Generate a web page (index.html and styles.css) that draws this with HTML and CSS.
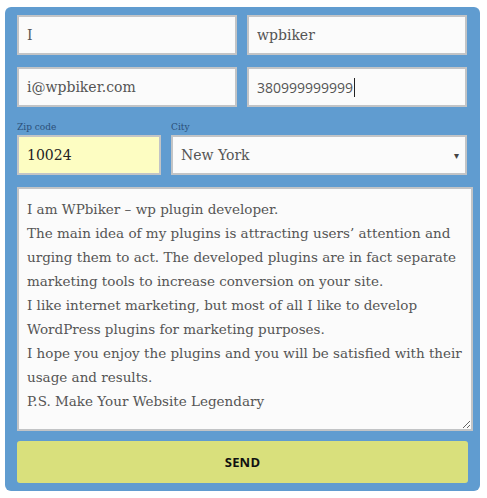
FILE: index.html
```html
<!DOCTYPE html>
<html>
<head>
<meta charset="utf-8">
<link rel="stylesheet" href="styles.css">
</head>
<body>
<form class="panel">
  <div class="row">
    <input class="field" type="text" value="I">
    <input class="field" type="text" value="wpbiker">
  </div>
  <div class="row">
    <input class="field" type="text" value="i@wpbiker.com">
    <div class="field phone">380999999999<span class="caret"></span></div>
  </div>
  <div class="row labeled">
    <div class="col zip-col">
      <label class="lbl">Zip code</label>
      <input class="field zip" type="text" value="10024">
    </div>
    <div class="col city-col">
      <label class="lbl">City</label>
      <div class="field select">New York<span class="arrow">▾</span></div>
    </div>
  </div>
  <textarea class="message">I am WPbiker – wp plugin developer.
The main idea of my plugins is attracting users’ attention and
urging them to act. The developed plugins are in fact separate
marketing tools to increase conversion on your site.
I like internet marketing, but most of all I like to develop
WordPress plugins for marketing purposes.
I hope you enjoy the plugins and you will be satisfied with their
usage and results.
P.S. Make Your Website Legendary</textarea>
  <button class="send" type="button">SEND</button>
</form>
</body>
</html>
```
FILE: styles.css
```css
* { box-sizing: border-box; }
html, body { margin: 0; padding: 0; background: #ffffff; }
body { padding: 7px 0 0 5px; }

.panel {
  width: 475px;
  height: 484px;
  background: #609cd0;
  border-radius: 6px;
  padding: 8px 13px 8px 12px;
  display: flex;
  flex-direction: column;
  margin: 0;
}

.row {
  display: flex;
  gap: 10px;
  margin-bottom: 12px;
}

.field {
  width: 220px;
  height: 40px;
  border: 2px solid #c2c4c6;
  background: #fbfbfb;
  padding: 0 8px;
  font-family: "DejaVu Serif", serif;
  font-size: 14px;
  color: #555555;
  outline: none;
  margin: 0;
  display: flex;
  align-items: center;
}

.phone {
  font-family: "Open Sans", "Noto Sans", sans-serif;
  font-size: 14px;
  color: #555555;
}
.caret {
  display: inline-block;
  width: 1px;
  height: 19px;
  background: #222;
  margin-left: 1px;
}

.labeled { margin-bottom: 12px; }
.col { display: flex; flex-direction: column; }
.zip-col { width: 144px; }
.city-col { width: 296px; }
.lbl {
  font-family: "DejaVu Serif", serif;
  font-size: 9px;
  line-height: 12px;
  color: #2b4f78;
  height: 16px;
  padding-top: 2px;
}
.zip { width: 144px; background: #fdfdc2; color: #222222; }
.select { width: 296px; justify-content: space-between; padding-right: 6px; }
.arrow { font-size: 10px; color: #444; font-family: "DejaVu Sans", sans-serif; }

.message {
  width: 456px;
  height: 244px;
  border: 2px solid #c2c4c6;
  background: #fbfbfb;
  padding: 8px 8px;
  font-family: "DejaVu Serif", serif;
  font-size: 13.5px;
  line-height: 24px;
  color: #555555;
  white-space: pre;
  overflow: hidden;
  resize: vertical;
  margin: 0 0 10px 0;
  outline: none;
}

.send {
  width: 451px;
  height: 42px;
  border: none;
  border-radius: 3px;
  background: #d9e07c;
  font-family: "Open Sans", "Noto Sans", sans-serif;
  font-weight: 700;
  font-size: 13px;
  color: #111111;
  letter-spacing: 0.2px;
  margin: 0;
  padding: 0;
}
```
